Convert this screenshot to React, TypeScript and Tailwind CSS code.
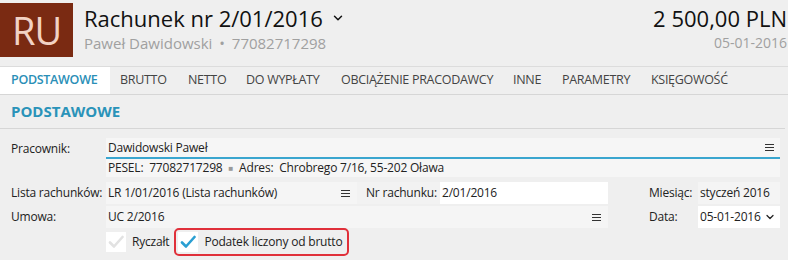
import { ChevronDown } from 'lucide-react'

const tabs = [
  { label: 'BRUTTO', w: 'w-[68px]' },
  { label: 'NETTO', w: 'w-[58px]' },
  { label: 'DO WYPŁATY', w: 'w-[95px]' },
  { label: 'OBCIĄŻENIE PRACODAWCY', w: 'w-[172px]' },
  { label: 'INNE', w: 'w-[49px]' },
  { label: 'PARAMETRY', w: 'w-[89px]' },
  { label: 'KSIĘGOWOŚĆ', w: 'w-[96px]' },
]

function MenuIcon() {
  return (
    <svg width="9" height="9" viewBox="0 0 9 9" className="shrink-0">
      <path d="M0 1.5h9M0 4.5h9M0 7.5h9" stroke="#333" strokeWidth="1.2" />
    </svg>
  )
}

function Check({ color }: { color: string }) {
  return (
    <svg width="16" height="14" viewBox="0 0 16 14">
      <path d="M2 7.5l4 4L14.5 2" fill="none" stroke={color} strokeWidth="2.6" strokeLinecap="round" strokeLinejoin="round" />
    </svg>
  )
}

export default function App() {
  return (
    <div className="w-[788px] h-[260px] overflow-hidden bg-[#efefef] text-[#222] font-['Open_Sans',sans-serif] whitespace-nowrap">
      <header className="flex h-[67px] border-b border-[#dcdcdc]">
        <div className="mt-[3px] w-[73px] h-[54px] bg-[#7a2a12] text-[#f2d2c4] text-[38px] leading-none flex items-center justify-center tracking-[-1px]">
          RU
        </div>
        <div className="ml-[11px] pt-[3px]">
          <div className="flex items-center text-[22px] leading-[30px] text-[#111]">
            Rachunek nr 2/01/2016
            <ChevronDown className="ml-[8px] w-[14px] h-[14px]" strokeWidth={2.5} />
          </div>
          <div className="text-[15px] leading-[20px] text-[#a0a0a0]">
            Paweł Dawidowski <span className="mx-[3px]">•</span> 77082717298
          </div>
        </div>
        <div className="ml-auto pt-[3px] pr-[1px] text-right">
          <div className="text-[22px] leading-[30px] text-[#111]">2 500,00 PLN</div>
          <div className="text-[14px] leading-[20px] text-[#a0a0a0]">05-01-2016</div>
        </div>
      </header>

      <nav className="flex h-[28px] border-b border-[#d6d6d6] text-[12.5px] tracking-[-0.3px] text-[#444] items-stretch">
        <div className="w-[110px] bg-white pl-[11px] flex items-center font-semibold text-[#2a8fb7]">PODSTAWOWE</div>
        {tabs.map((t) => (
          <div key={t.label} className={`${t.w} pl-[10px] flex items-center`}>
            {t.label}
          </div>
        ))}
      </nav>

      <section className="text-[12px] tracking-[-0.2px]">
        <h2 className="h-[34px] mr-[3px] border-b border-[#d6d6d6] pl-[11px] flex items-center text-[15px] tracking-normal font-bold text-[#2a93b9]">
          PODSTAWOWE
        </h2>

        <div className="pt-[9px] pr-[8px]">
          <div className="flex h-[21px]">
            <div className="w-[106px] pl-[11px] flex items-center">Pracownik:</div>
            <div className="flex-1 bg-[#f6f6f6] border-b-2 border-[#3aa6cf] pl-[2px] pr-[6px] flex items-center justify-between">
              <span>Dawidowski Paweł</span>
              <MenuIcon />
            </div>
          </div>
          <div className="ml-[106px] h-[18px] bg-[#f6f6f6] pl-[2px] flex items-center">
            PESEL:&nbsp; 77082717298 <span className="mx-[6px] text-[#999] text-[8px]">■</span> Adres:&nbsp; Chrobrego 7/16, 55-202 Oława
          </div>

          <div className="flex h-[22px] mt-[5px]">
            <div className="w-[106px] pl-[11px] flex items-center">Lista rachunków:</div>
            <div className="w-[251px] bg-[#f5f5f5] pl-[2px] pr-[7px] flex items-center justify-between">
              <span>LR 1/01/2016 (Lista rachunków)</span>
              <MenuIcon />
            </div>
            <div className="w-[83px] bg-[#f2f2f2] pl-[9px] flex items-center">Nr rachunku:</div>
            <div className="w-[168px] bg-white pl-[2px] flex items-center">2/01/2016</div>
            <div className="w-[33px]" />
            <div className="w-[57px] pl-[8px] flex items-center">Miesiąc:</div>
            <div className="flex-1 bg-[#f4f4f4] pl-[2px] flex items-center">styczeń 2016</div>
          </div>

          <div className="flex h-[22px] mt-[2px]">
            <div className="w-[106px] pl-[11px] flex items-center">Umowa:</div>
            <div className="w-[502px] bg-[#f5f5f5] pl-[2px] pr-[7px] flex items-center justify-between">
              <span>UC 2/2016</span>
              <MenuIcon />
            </div>
            <div className="w-[33px]" />
            <div className="w-[57px] pl-[8px] flex items-center">Data:</div>
            <div className="flex-1 bg-white pl-[2px] pr-[4px] flex items-center justify-between">
              <span>05-01-2016</span>
              <ChevronDown className="w-[12px] h-[12px]" strokeWidth={2.5} />
            </div>
          </div>

          <div className="flex items-center -mt-[1px] ml-[106px] h-[30px]">
            <div className="w-[20px] h-[20px] bg-white flex items-center justify-center">
              <Check color="#e2e2e2" />
            </div>
            <span className="ml-[6px]">Ryczałt</span>
            <div className="ml-[5px] h-[28px] border-2 border-[#e0303a] rounded-[5px] flex items-center pl-[2px] pr-[5px]">
              <div className="w-[20px] h-[20px] bg-white flex items-center justify-center">
                <Check color="#2a9fd2" />
              </div>
              <span className="ml-[6px]">Podatek liczony od brutto</span>
            </div>
          </div>
        </div>
      </section>
    </div>
  )
}
